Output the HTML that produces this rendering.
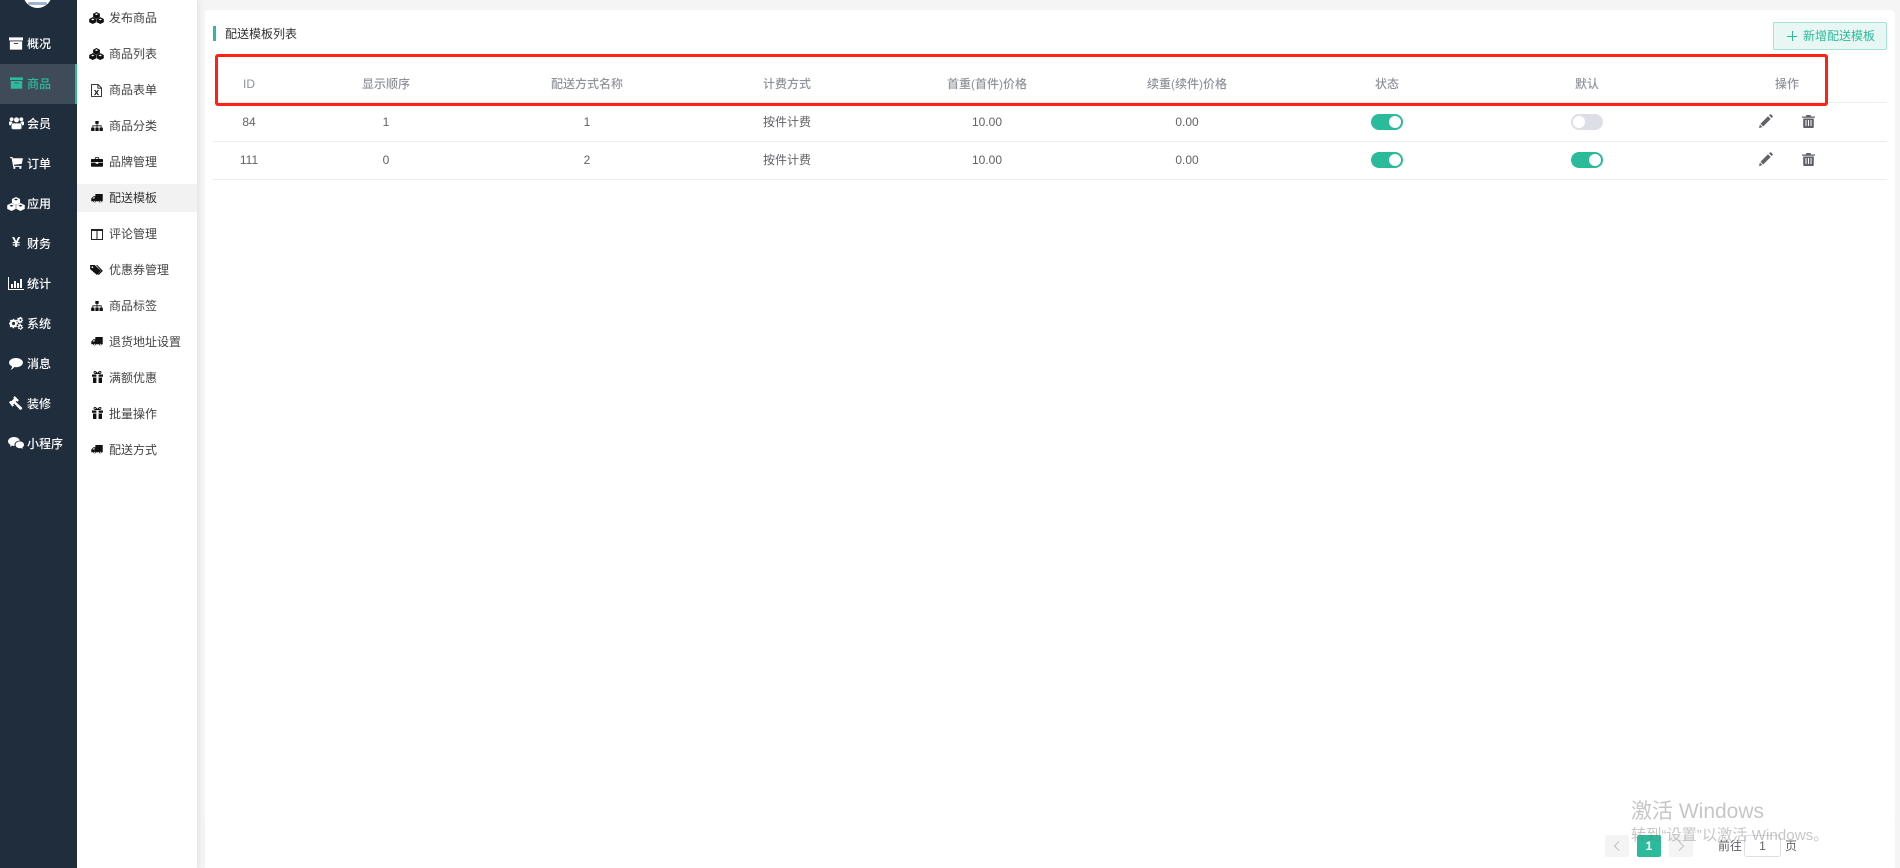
<!DOCTYPE html>
<html lang="zh"><head><meta charset="utf-8"><title>配送模板</title>
<style>
*{box-sizing:border-box}
html,body{margin:0;padding:0;width:1900px;height:868px;overflow:hidden;background:#f5f5f5;font:12px/16px "Liberation Sans","Noto Sans CJK SC",sans-serif}
.a{position:absolute;white-space:nowrap}
svg{position:absolute;display:block;fill:currentColor}
.m,.s,.h,.c,.t,body>svg{filter:blur(.3px)}
#side{left:0;top:0;width:77px;height:868px;background:#1f2d3d}
#sub{left:77px;top:0;width:120px;height:868px;background:#fff;box-shadow:2px 0 5px rgba(0,0,0,.08)}
.m{left:27px;color:#fff;width:50px;font-weight:500}
.s{left:109px;color:#444}
.h,.c{text-align:center;width:200px}
.h{color:#909399;font-weight:500}
.c{color:#606266}
.line{left:213px;width:1674px;height:1px;background:#ebeef5}
.sw{width:32px;height:16px;border-radius:8px;background:#2bbb9a}
.sw i{position:absolute;top:2px;left:18px;width:12px;height:12px;border-radius:50%;background:#fff}
.sw.off{background:#dcdfe6}.sw.off i{left:2px}
.pg{top:835px;width:24px;height:22px;background:#f4f4f5;border-radius:2px;color:#c0c4cc;text-align:center;line-height:22px}
</style></head><body>
<svg width="0" height="0" style="position:absolute;filter:none">
<defs>
<symbol id="archive" viewBox="0 0 16 14"><path fill-rule="evenodd" d="M0 0h16v3.500H0zM1 4.500h14V14H1zM5.500 6.500v1h5v-1z"/></symbol>
<symbol id="users" viewBox="0 0 18 15"><circle cx="9" cy="3.800" r="3"/><circle cx="3.200" cy="3" r="2.300"/><circle cx="14.800" cy="3" r="2.300"/><path d="M5 8h8c1.500 0 2 1.500 2 3v2.500c0 1-1 1.500-2 1.500H5c-1 0-2-.5-2-1.500V11c0-1.500.5-3 2-3zM0 6.500C0 5.700 1 5.500 3 5.500c.5 1 1 1.500 1.700 2C3 8 2.300 9 2.200 10.500 1 10.500 0 10 0 9zM18 6.500c0-.8-1-1-3-1-.5 1-1 1.500-1.700 2 1.700.5 2.400 1.500 2.500 3 1.200 0 2.200-.5 2.200-1.500z"/></symbol>
<symbol id="cart" viewBox="0 0 15 14"><path d="M0 0h2.800l.5 1.500H15l-1.300 6.500-9.200 1 .3 1.300H13.500v1.200H3.600L1.800 1.300H0z"/><circle cx="5" cy="12.700" r="1.300"/><circle cx="12" cy="12.700" r="1.300"/></symbol>
<symbol id="cubes" viewBox="0 0 16 14" preserveAspectRatio="none"><path fill-rule="evenodd" d="M8 0l3.600 2v4L8 8 4.400 6V2zM8 1.500L6.200 2.500 8 3.500l1.800-1zM4 6l3.800 2.100v3.800L4 14 .2 11.900V8.100zM4 7.800L2.200 8.800 4 9.800l1.800-1zM12 6l3.800 2.100v3.800L12 14l-3.800-2.100V8.100zM12 7.800l-1.800 1 1.800 1 1.800-1z"/></symbol>
<symbol id="chart" viewBox="0 0 16 13"><path d="M0 0h1v12h15v1H0zM3 7h2v4H3zM6 4h2v7H6zM9 6h2v5H9zM12 2h2v9h-2z"/></symbol>
<symbol id="cogs" viewBox="0 0 16 14"><path fill-rule="evenodd" d="M5.500 3l1 .3.800-.6 1.300 1.300-.6.900.4 1 1 .2v1.800l-1 .2-.4 1 .6.900-1.300 1.300-.8-.6-1 .4-.2 1H3.900l-.2-1-1-.4-.8.600L.6 10l.6-.9-.4-1-.8-.2V6.100l1-.2.400-1L.8 4l1.300-1.300.8.6 1-.3.200-1h1.600zM4.800 5.300a1.700 1.700 0 1 0 0 3.400 1.700 1.700 0 0 0 0-3.400zM12.700 0l.5.700.8-.2.500.9-.5.700.3.800h.9v1l-.9.200-.3.800.5.700-.7.700-.8-.5-.7.300-.2.900h-1l-.2-.9-.8-.3-.7.500-.7-.7.500-.7-.3-.8-.8-.2v-1h.9l.3-.8-.5-.7.700-.7.700.5.800-.3.200-.8zM12.200 2.100a1.100 1.100 0 1 0 0 2.200 1.100 1.100 0 0 0 0-2.200zM12.700 8l.5.700.8-.2.500.9-.5.700.3.800h.9v1l-.9.200-.3.800-.9.100-.1.800h-1l-.2-.9-.8-.3-.7.500-.7-.7.500-.7-.3-.8-.8-.2v-1h.9l.3-.8-.5-.7.700-.7.700.5.800-.3.200-.8zM12.200 10a1.100 1.100 0 1 0 0 2.200 1.100 1.100 0 0 0 0-2.200z"/></symbol>
<symbol id="comment" viewBox="0 0 15 13"><path d="M7.500 0C11.600 0 15 2.200 15 5s-3.400 5-7.500 5c-.7 0-1.300 0-1.900-.2C4.700 11 3.300 12.500 1.500 12.800c1-1.100 1.700-2.200 1.700-3.700C1.200 8.200 0 6.700 0 5 0 2.200 3.400 0 7.500 0z"/></symbol>
<symbol id="gavel" viewBox="0 0 14 14"><path d="M5.700 0l4.200 4.200-1.500 1.500-.8-.8-.9.9 6.200 5.700c.7.700.1 1.400-.4 1.900s-1.200.8-1.700.2L5.100 7.500l-.8.900.7.800-1.500 1.500L0 6.200l1.500-1.500.7.700L5 2.500l-.7-.9z"/></symbol>
<symbol id="wechat" viewBox="0 0 16 13"><path d="M6 0c2.900 0 5.300 1.500 5.800 3.600C9 3.600 6.500 5.300 6.500 7.700c0 .5.100 .8.200 1.200h-.7c-.7 0-1.300-.1-1.900-.3L2 9.700l.5-1.800C1 7 0 5.800 0 4.400 0 2 2.700 0 6 0z"/><path d="M11.800 4.400c2.300 0 4.200 1.500 4.200 3.300 0 1.100-.6 1.900-1.600 2.700l.4 1.500-1.700-.9c-.4.100-.9.200-1.300.2-2.300 0-4.200-1.600-4.200-3.500s1.900-3.300 4.200-3.300z"/></symbol>
<symbol id="file" viewBox="0 0 12 14"><path fill-rule="evenodd" d="M0 0h8l4 4v10H0zM1 1v12h10V5H7V1zM8 1.500V4h2.500zM3.300 6.500h1.600L6 8.200l1.100-1.700h1.600L6.900 9.200l1.900 2.800H7.200L6 10.200 4.800 12H3.200l1.900-2.800z"/></symbol>
<symbol id="sitemap" viewBox="0 0 14 12"><path d="M5 0h4v3.500H7.500V5.300H12.500V8H14v4h-4V8h1.500V6.300h-4V8H9v4H5V8h1.500V6.300h-4V8H4v4H0V8h1.500V5.300h5V3.500H5z"/></symbol>
<symbol id="brief" viewBox="0 0 14 11"><path d="M4.500 2V.8c0-.4.300-.8.800-.8h3.400c.5 0 .8.400.8.800V2H13c.6 0 1 .4 1 1v2.500H0V3c0-.6.400-1 1-1zM5.500 1v1h3V1zM0 6.300h5.500V7.500h3V6.300H14V10c0 .6-.4 1-1 1H1c-.6 0-1-.4-1-1z"/></symbol>
<symbol id="truck" viewBox="0 0 14 11"><path fill-rule="evenodd" d="M14 0v8.800h-1.200a1.900 1.900 0 0 1-3.700 0H6a1.900 1.900 0 0 1-3.700 0H0V5.500L2.700 2.700H5V0zM1.500 5.500H4V3.700H3zM4.200 8.200a.8.8 0 1 0 0 1.600.8.800 0 0 0 0-1.600zM11 8.200a.8.8 0 1 0 0 1.600.8.800 0 0 0 0-1.600z"/></symbol>
<symbol id="columns" viewBox="0 0 12 11"><path fill-rule="evenodd" d="M0 0h12v11H0zM1 2v8h4.500V2zM6.500 2v8H11V2z"/></symbol>
<symbol id="tags" viewBox="0 0 14 11"><path fill-rule="evenodd" d="M0 0h5l7 6.500L7.500 11 0 4.500zM2.500 1.500a1 1 0 1 0 0 2 1 1 0 0 0 0-2z"/><path d="M6.500 0h1.300l6.200 6.500L9.500 11l-1-.8 3.700-3.700z"/></symbol>
<symbol id="gift" viewBox="0 0 11 12"><path fill-rule="evenodd" d="M0 3.500h4.400v2.300H0zM6.600 3.500H11v2.300H6.600zM1 6.500h3.400V12H1.500c-.3 0-.5-.2-.5-.5zM6.600 6.500H10v5c0 .3-.2 .5-.5 .5H6.600zM2.800 0C3.900 0 5 1 5.500 2 6 1 7.100 0 8.200 0c1.700 0 1.800 2.500-.3 3H3.100C1 2.500 1.100 0 2.800 0zM2.800 1c-.6 0-.6 .9 .2 1h1C3.700 1.500 3.300 1 2.800 1zM8.200 1c-.5 0-.9 .5-1.200 1h1c.8-.1 .8-1 .2-1z"/></symbol>
<symbol id="pencil" viewBox="0 0 14 14"><path d="M0 14l.9-3.500 2.600 2.600zM1.500 9.800L9 2.300l2.700 2.700-7.500 7.500zM10 1.300l.8-.8c.4-.4 1-.4 1.400 0l1.300 1.300c.4.400.4 1 0 1.400l-.8.800z"/></symbol>
<symbol id="trash" viewBox="0 0 13 13"><path fill-rule="evenodd" d="M4.500 0h4l.7 1.500H13v1.200H0V1.500h3.800zM1.200 3.500h10.600V12c0 .6-.4 1-1 1H2.200c-.6 0-1-.4-1-1zM3.500 5v6h1V5zM6 5v6h1V5zM8.500 5v6h1V5z"/></symbol>
</defs></svg>

<div class="a" style="left:197px;top:0;width:1703px;height:868px;background:#f5f5f5"></div>
<div class="a" style="left:205px;top:10px;width:1690px;height:858px;background:#fff;border-radius:4px 4px 0 0"></div>
<div class="a" style="left:205px;top:821px;width:1690px;height:47px;background:#fff;box-shadow:0 -1px 2px rgba(0,0,0,.012)"></div>

<div class="a" id="side"></div>
<div class="a" style="left:23px;top:-21px;width:29px;height:29px;border-radius:50%;background:#fff"></div>
<div class="a" style="left:28px;top:2px;width:19px;height:3px;border-radius:2px;background:#9fb6d2"></div>
<div class="a" style="left:0;top:64px;width:77px;height:40px;background:#3f4b59;border-right:2px solid #2bbb9a"></div>

<svg style="left:9px;top:37px;color:#fff" width="14" height="13"><use href="#archive"/></svg><div class="a m" style="top:36px">概况</div>
<svg style="left:10px;top:77px;color:#2bbb9a" width="13" height="12"><use href="#archive"/></svg><div class="a m" style="top:76px;color:#2bbb9a">商品</div>
<svg style="left:9px;top:116px;color:#fff" width="15" height="14"><use href="#users"/></svg><div class="a m" style="top:116px">会员</div>
<svg style="left:10px;top:157px;color:#fff" width="13" height="12"><use href="#cart"/></svg><div class="a m" style="top:156px">订单</div>
<svg style="left:7px;top:197px;color:#fff" width="18" height="14"><use href="#cubes"/></svg><div class="a m" style="top:196px">应用</div>
<div class="a m" style="left:12px;top:235px;color:#fff;font-weight:700;font-size:15px;line-height:16px;width:auto">¥</div><div class="a m" style="top:236px">财务</div>
<svg style="left:8px;top:277px;color:#fff" width="16" height="13"><use href="#chart"/></svg><div class="a m" style="top:276px">统计</div>
<svg style="left:9px;top:317px;color:#fff" width="15" height="13"><use href="#cogs"/></svg><div class="a m" style="top:316px">系统</div>
<svg style="left:9px;top:358px;color:#fff" width="14" height="12"><use href="#comment"/></svg><div class="a m" style="top:356px">消息</div>
<svg style="left:9px;top:396px;color:#fff" width="14" height="14"><use href="#gavel"/></svg><div class="a m" style="top:396px">装修</div>
<svg style="left:8px;top:437px;color:#fff" width="16" height="13"><use href="#wechat"/></svg><div class="a m" style="top:436px">小程序</div>

<div class="a" id="sub"></div>
<div class="a" style="left:77px;top:184px;width:120px;height:28px;background:#f2f2f2"></div>
<svg style="left:89px;top:12px;color:#111" width="15" height="12"><use href="#cubes"/></svg><div class="a s" style="top:10px">发布商品</div>
<svg style="left:89px;top:48px;color:#111" width="15" height="12"><use href="#cubes"/></svg><div class="a s" style="top:46px">商品列表</div>
<svg style="left:91px;top:84px;color:#222" width="11" height="13"><use href="#file"/></svg><div class="a s" style="top:82px">商品表单</div>
<svg style="left:91px;top:121px;color:#111" width="12" height="10"><use href="#sitemap"/></svg><div class="a s" style="top:118px">商品分类</div>
<svg style="left:91px;top:157px;color:#111" width="12" height="10"><use href="#brief"/></svg><div class="a s" style="top:154px">品牌管理</div>
<svg style="left:91px;top:194px;color:#111" width="12" height="9"><use href="#truck"/></svg><div class="a s" style="top:190px;color:#333">配送模板</div>
<svg style="left:91px;top:229px;color:#222" width="12" height="11"><use href="#columns"/></svg><div class="a s" style="top:226px">评论管理</div>
<svg style="left:90px;top:265px;color:#111" width="13" height="10"><use href="#tags"/></svg><div class="a s" style="top:262px">优惠券管理</div>
<svg style="left:91px;top:301px;color:#111" width="12" height="10"><use href="#sitemap"/></svg><div class="a s" style="top:298px">商品标签</div>
<svg style="left:91px;top:337px;color:#111" width="12" height="9"><use href="#truck"/></svg><div class="a s" style="top:334px">退货地址设置</div>
<svg style="left:92px;top:371px;color:#111" width="11" height="12"><use href="#gift"/></svg><div class="a s" style="top:370px">满额优惠</div>
<svg style="left:92px;top:407px;color:#111" width="11" height="12"><use href="#gift"/></svg><div class="a s" style="top:406px">批量操作</div>
<svg style="left:91px;top:445px;color:#111" width="12" height="9"><use href="#truck"/></svg><div class="a s" style="top:442px">配送方式</div>

<div class="a" style="left:213px;top:26px;width:3px;height:15px;background:#2bbb9a"></div>
<div class="a t" style="left:225px;top:26px;color:#303133">配送模板列表</div>

<div class="a" style="left:1773px;top:22px;width:114px;height:28px;background:#e8f7f4;border:1px solid #a5e2d5;border-radius:2px"></div>
<div class="a" style="left:1787px;top:31px;width:10px;height:10px;background:linear-gradient(#2bbb9a,#2bbb9a) center/10px 1px no-repeat,linear-gradient(#2bbb9a,#2bbb9a) center/1px 10px no-repeat"></div>
<div class="a t" style="left:1803px;top:28px;color:#2bbb9a">新增配送模板</div>

<div class="a h" style="left:149px;top:76px">ID</div>
<div class="a h" style="left:286px;top:76px">显示顺序</div>
<div class="a h" style="left:487px;top:76px">配送方式名称</div>
<div class="a h" style="left:687px;top:76px">计费方式</div>
<div class="a h" style="left:887px;top:76px">首重(首件)价格</div>
<div class="a h" style="left:1087px;top:76px">续重(续件)价格</div>
<div class="a h" style="left:1287px;top:76px">状态</div>
<div class="a h" style="left:1487px;top:76px">默认</div>
<div class="a h" style="left:1687px;top:76px">操作</div>
<div class="a line" style="top:102px"></div>

<div class="a c" style="left:149px;top:114px">84</div>
<div class="a c" style="left:286px;top:114px">1</div>
<div class="a c" style="left:487px;top:114px">1</div>
<div class="a c" style="left:687px;top:114px">按件计费</div>
<div class="a c" style="left:887px;top:114px">10.00</div>
<div class="a c" style="left:1087px;top:114px">0.00</div>
<div class="a sw" style="left:1371px;top:114px"><i></i></div>
<div class="a sw off" style="left:1571px;top:114px"><i></i></div>
<svg style="left:1759px;top:114px;color:#5f6266" width="14" height="14"><use href="#pencil"/></svg>
<svg style="left:1802px;top:115px;color:#5f6266" width="13" height="13"><use href="#trash"/></svg>
<div class="a line" style="top:141px"></div>

<div class="a c" style="left:149px;top:152px">111</div>
<div class="a c" style="left:286px;top:152px">0</div>
<div class="a c" style="left:487px;top:152px">2</div>
<div class="a c" style="left:687px;top:152px">按件计费</div>
<div class="a c" style="left:887px;top:152px">10.00</div>
<div class="a c" style="left:1087px;top:152px">0.00</div>
<div class="a sw" style="left:1371px;top:152px"><i></i></div>
<div class="a sw" style="left:1571px;top:152px"><i></i></div>
<svg style="left:1759px;top:152px;color:#5f6266" width="14" height="14"><use href="#pencil"/></svg>
<svg style="left:1802px;top:153px;color:#5f6266" width="13" height="13"><use href="#trash"/></svg>
<div class="a line" style="top:179px"></div>

<div class="a" style="left:215px;top:54px;width:1613px;height:52px;border:3px solid #ff2114;border-radius:3px"></div>

<div class="a pg" style="left:1605px">
<svg style="left:8px;top:6px" width="8" height="10" viewBox="0 0 8 10"><path d="M6 .5L1.500 5 6 9.500" fill="none" stroke="#c0c4cc" stroke-width="1.200"/></svg></div>
<div class="a pg" style="left:1637px;background:#2bbb9a;color:#fff;font-weight:700">1</div>
<div class="a pg" style="left:1669px">
<svg style="left:8px;top:6px" width="8" height="10" viewBox="0 0 8 10"><path d="M2 .5L6.500 5 2 9.500" fill="none" stroke="#c0c4cc" stroke-width="1.200"/></svg></div>
<div class="a" style="left:1718px;top:838px;color:#606266">前往</div>
<div class="a" style="left:1744px;top:835px;width:37px;height:22px;border:1px solid #dcdfe6;border-radius:3px;text-align:center;line-height:20px;color:#606266">1</div>
<div class="a" style="left:1785px;top:838px;color:#606266">页</div>

<div class="a" style="left:1631px;top:799px;font-size:21px;line-height:26px;color:rgba(120,120,120,.42)">激活 Windows</div>
<div class="a" style="left:1631px;top:827px;font-size:15.200px;line-height:18px;color:rgba(120,120,120,.42)">转到“设置”以激活 Windows。</div>
</body></html>
